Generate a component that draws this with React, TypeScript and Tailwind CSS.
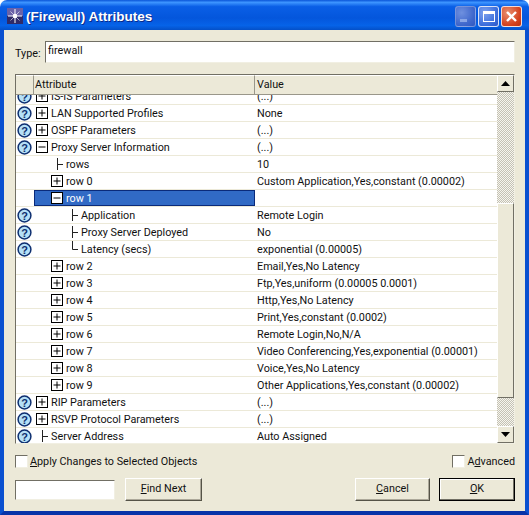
const FONT = "font-['Roboto',sans-serif]";

type Row = {
  help?: boolean;
  level: number;
  box?: '+' | '-';
  conn?: 'tee' | 'end';
  label: string;
  value: string;
  selected?: boolean;
};

const rows: Row[] = [
  { help: true, level: 0, box: '+', label: 'IS-IS Parameters', value: '(...)' },
  { help: true, level: 0, box: '+', label: 'LAN Supported Profiles', value: 'None' },
  { help: true, level: 0, box: '+', label: 'OSPF Parameters', value: '(...)' },
  { help: true, level: 0, box: '-', label: 'Proxy Server Information', value: '(...)' },
  { level: 1, conn: 'tee', label: 'rows', value: '10' },
  { level: 1, box: '+', label: 'row 0', value: 'Custom Application,Yes,constant (0.00002)' },
  { level: 1, box: '-', label: 'row 1', value: '', selected: true },
  { help: true, level: 2, conn: 'tee', label: 'Application', value: 'Remote Login' },
  { help: true, level: 2, conn: 'tee', label: 'Proxy Server Deployed', value: 'No' },
  { help: true, level: 2, conn: 'end', label: 'Latency (secs)', value: 'exponential (0.00005)' },
  { level: 1, box: '+', label: 'row 2', value: 'Email,Yes,No Latency' },
  { level: 1, box: '+', label: 'row 3', value: 'Ftp,Yes,uniform (0.00005 0.0001)' },
  { level: 1, box: '+', label: 'row 4', value: 'Http,Yes,No Latency' },
  { level: 1, box: '+', label: 'row 5', value: 'Print,Yes,constant (0.0002)' },
  { level: 1, box: '+', label: 'row 6', value: 'Remote Login,No,N/A' },
  { level: 1, box: '+', label: 'row 7', value: 'Video Conferencing,Yes,exponential (0.00001)' },
  { level: 1, box: '+', label: 'row 8', value: 'Voice,Yes,No Latency' },
  { level: 1, box: '+', label: 'row 9', value: 'Other Applications,Yes,constant (0.00002)' },
  { help: true, level: 0, box: '+', label: 'RIP Parameters', value: '(...)' },
  { help: true, level: 0, box: '+', label: 'RSVP Protocol Parameters', value: '(...)' },
  { help: true, level: 0, conn: 'tee', label: 'Server Address', value: 'Auto Assigned' },
];

function Help() {
  return (
    <svg width="15" height="15" viewBox="0 0 15 15" className="block">
      <circle cx="7.5" cy="7.5" r="6.4" fill="#b5e0f7" stroke="#0e2f70" strokeWidth="1.5" />
      <text x="7.5" y="11.6" textAnchor="middle" fontSize="11" fontWeight="700" fontFamily="Liberation Sans" fill="#0e2f70">?</text>
    </svg>
  );
}

function TreeBox({ kind }: { kind: '+' | '-' }) {
  return (
    <svg width="12" height="12" viewBox="0 0 12 12" className="block shrink-0">
      <rect x="0.5" y="0.5" width="11" height="11" fill="#fff" stroke="#000" />
      <path d={kind === '+' ? 'M2.5 6H9.5M6 2.5V9.5' : 'M2.5 6H9.5'} stroke="#000" />
    </svg>
  );
}

function Conn({ kind }: { kind: 'tee' | 'end' }) {
  return (
    <svg width="12" height="16" viewBox="0 0 12 16" className="block shrink-0">
      <path d={kind === 'tee' ? 'M6.5 2V14M6.5 8.5H13' : 'M6.5 0V8.5H13'} stroke="#222" fill="none" />
    </svg>
  );
}

function TableRow({ r }: { r: Row }) {
  const indent = r.selected ? 'pl-[16px]' : r.level === 0 ? 'pl-[2px]' : r.level === 1 ? 'pl-[17px]' : 'pl-[32px]';
  const sel = r.selected ? 'bg-[#316ac5] border border-[#0a2a7a]' : '';
  return (
    <div className="flex h-[17px] shrink-0 text-[#111] border-b border-[#ece9d8]">
      <div className="w-[18px] shrink-0 flex items-center pl-[1px]">{r.help && <Help />}</div>
      <div className={`w-[221px] shrink-0 flex items-center ${indent} ${sel}`}>
        {r.box ? <TreeBox kind={r.box} /> : <Conn kind={r.conn ?? 'tee'} />}
        <span className={`ml-[3px] pt-[2px] ${r.selected ? 'text-white' : ''}`}>{r.label}</span>
      </div>
      <div className="pl-[2px] pt-[2px] whitespace-nowrap flex items-center">{r.value}</div>
    </div>
  );
}

function Arrow({ up }: { up?: boolean }) {
  return (
    <div className="h-[17px] w-[17px] shrink-0 bg-[#ece9d8] border border-t-white border-l-white border-r-[#716f64] border-b-[#716f64] flex items-center justify-center">
      <svg width="9" height="5" viewBox="0 0 9 5">
        <path d={up ? 'M4.5 0L9 5H0Z' : 'M0 0H9L4.5 5Z'} fill="#000" />
      </svg>
    </div>
  );
}

function Check({ label }: { label: React.ReactNode }) {
  return (
    <div className="flex items-center gap-[2px]">
      <div className="w-[13px] h-[13px] bg-white border border-t-[#716f64] border-l-[#716f64] border-r-[#f1efe2] border-b-[#f1efe2]" />
      <span className="pt-[2px]">{label}</span>
    </div>
  );
}

function Btn({ w, label, def }: { w: string; label: React.ReactNode; def?: boolean }) {
  return (
    <div className={`${w} h-[23px] flex items-center justify-center bg-[#ece9d8] border ${def ? 'border-black shadow-[inset_-1px_-1px_0_#716f64,inset_1px_1px_0_#fff]' : 'border-t-white border-l-white border-r-[#555347] border-b-[#555347] shadow-[inset_-1px_-1px_0_#aca899]'}`}>
      {label}
    </div>
  );
}

function WinBtn({ children, tone }: { children: React.ReactNode; tone: 'dim' | 'blue' | 'red' }) {
  const bg =
    tone === 'red'
      ? 'bg-[radial-gradient(circle_at_30%_30%,#e88f70,#d5431f_65%,#b8300f)] border-white/80'
      : tone === 'blue'
        ? 'bg-[radial-gradient(circle_at_30%_30%,#7ea2ee,#3d6fdc_65%,#2b55c6)] border-white/80'
        : 'bg-[radial-gradient(circle_at_30%_30%,#6f90df,#3f67cc_65%,#3059c0)] border-white/30';
  return <div className={`w-[21px] h-[21px] rounded-[3px] border flex items-center justify-center ${bg}`}>{children}</div>;
}

export default function App() {
  return (
    <div className={`w-[529px] h-[515px] flex flex-col bg-white text-[10.8px] leading-none ${FONT}`}>
      <div className="h-[30px] shrink-0 rounded-t-[7px] bg-[linear-gradient(180deg,#0a55d8_0%,#3d95ff_8%,#0a5fe6_22%,#0456dc_60%,#0663e8_85%,#0450c8_100%)] flex items-center pl-[7px] pr-[7px]">
        <svg width="16" height="16" viewBox="0 0 16 16" className="shrink-0 mt-[2px]">
          <rect width="16" height="16" fill="#2f2a68" />
          <rect width="16" height="8" fill="#6a62a8" />
          <path d="M8 1V15M1 8H15" stroke="#fff" strokeWidth="1" />
          <path d="M3.5 3.5L12.5 12.5M12.5 3.5L3.5 12.5" stroke="#fff" strokeWidth="0.8" opacity="0.75" />
          <circle cx="8" cy="8" r="2.2" fill="#fff" />
        </svg>
        <span className="ml-[3px] mt-[3px] text-white font-bold text-[13.5px] font-['Liberation_Sans',sans-serif] [text-shadow:1px_1px_0_#0a2a8a]">(Firewall) Attributes</span>
        <div className="ml-auto flex gap-[2px] mt-[2px]">
          <WinBtn tone="dim">
            <div className="w-[7px] h-[3px] bg-[#8aa6e6] mt-[9px] mr-[5px]" />
          </WinBtn>
          <WinBtn tone="blue">
            <div className="w-[12px] h-[11px] border border-white border-t-[3px]" />
          </WinBtn>
          <WinBtn tone="red">
            <svg width="13" height="13" viewBox="0 0 13 13">
              <path d="M2 2L11 11M11 2L2 11" stroke="#fff" strokeWidth="2.4" />
            </svg>
          </WinBtn>
        </div>
      </div>

      <div className="flex-1 min-h-0 flex flex-col bg-[#ece9d8] border-x-[4px] border-b-[4px] border-x-[#0a50d0] border-b-[#0833a8] pl-[11px] pr-[10px] pt-[11px] pb-[10px] text-[#111]">
        <div className="flex items-center h-[22px] shrink-0">
          <span className="w-[30px] pt-[5px]">Type:</span>
          <div className="flex-1 h-full bg-white border border-t-[#716f64] border-l-[#716f64] border-r-[#f1efe2] border-b-[#f1efe2] pl-[2px] pt-[4px]">firewall</div>
        </div>

        <div className="mt-[11px] h-[370px] shrink-0 flex bg-white border border-t-[#716f64] border-l-[#716f64] border-r-[#f1efe2] border-b-[#f1efe2] overflow-hidden">
          <div className="flex-1 min-w-0 flex flex-col relative overflow-hidden">
            <div className="h-[20px] shrink-0 flex bg-[#ece9d8] z-10 relative">
              <div className="w-[18px] border-r border-b border-r-[#9a978a] border-b-[#9a978a] border-t border-t-white" />
              <div className="w-[221px] border-r border-b border-r-[#9a978a] border-b-[#9a978a] border-t border-t-white flex items-center pl-[1px] pt-[1px]">Attribute</div>
              <div className="flex-1 border-b border-b-[#9a978a] border-t border-t-white flex items-center pl-[2px] pt-[1px]">Value</div>
            </div>
            <div className="flex-1 min-h-0 flex flex-col -mt-[7px]">
              {rows.map((r) => (
                <TableRow key={r.label} r={r} />
              ))}
            </div>
          </div>
          <div className="w-[17px] shrink-0 flex flex-col bg-[repeating-conic-gradient(#c4c1b4_0%_25%,#f6f5ee_0%_50%)] bg-[length:2px_2px]">
            <Arrow up />
            <div className="mt-[111px] h-[195px] shrink-0 bg-[#ece9d8] border border-t-white border-l-white border-r-[#716f64] border-b-[#716f64]" />
            <div className="flex-1" />
            <Arrow />
          </div>
        </div>

        <div className="mt-[11px] h-[13px] shrink-0 flex justify-between">
          <Check label={<><u>A</u>pply Changes to Selected Objects</>} />
          <Check label={<>A<u>d</u>vanced</>} />
        </div>

        <div className="mt-auto flex items-center">
          <div className="w-[100px] h-[20px] bg-white border border-t-[#716f64] border-l-[#716f64] border-r-[#f1efe2] border-b-[#f1efe2]" />
          <div className="ml-[10px]">
            <Btn w="w-[77px]" label={<><u>F</u>ind Next</>} />
          </div>
          <div className="ml-auto">
            <Btn w="w-[75px]" label={<><u>C</u>ancel</>} />
          </div>
          <div className="ml-[9px]">
            <Btn w="w-[76px]" def label={<><u>O</u>K</>} />
          </div>
        </div>
      </div>
    </div>
  );
}
